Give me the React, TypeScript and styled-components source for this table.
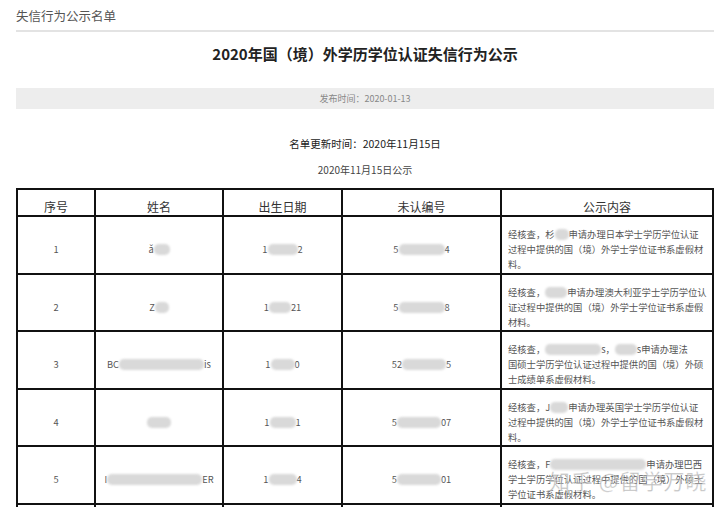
import React from "react";
import styled, { createGlobalStyle } from "styled-components";

const Global = createGlobalStyle`
  html, body { margin: 0; padding: 0; background: #fff; }
  body { font-family: "Noto Sans CJK SC", "Noto Sans", sans-serif; color: #333; }
`;

const Page = styled.div`
  padding: 0 6px 0 16px;
  overflow: hidden;
  height: 507px;
  box-sizing: border-box;
`;

const TopBar = styled.div`
  height: 30px;
  display: flex;
  align-items: center;
  font-size: 12.5px;
  color: #555;
  border-bottom: 2px solid #e3e3e3;
`;

const Title = styled.h1`
  margin: 12px 0 0;
  font-size: 15px;
  line-height: 20px;
  font-weight: 700;
  text-align: center;
  color: #222;
`;

const MetaBar = styled.div`
  margin-top: 24px;
  height: 21px;
  background: #ededed;
  display: flex;
  align-items: center;
  justify-content: center;
  font-size: 9px;
  color: #888;
`;

const Updated = styled.div`
  margin-top: 28px;
  font-size: 10.5px;
  line-height: 14px;
  color: #222;
  text-align: center;
`;

const Published = styled.div`
  margin-top: 12px;
  font-size: 10px;
  line-height: 14px;
  color: #444;
  text-align: center;
`;

const TableWrap = styled.div`
  position: relative;
  margin-top: 11px;
`;

const Table = styled.table`
  width: 698px;
  border-collapse: collapse;
  table-layout: fixed;
  border: 2px solid #111;
`;

const Th = styled.th`
  border: 2px solid #111;
  padding: 8px 0 0;
  height: 17px;
  line-height: 17px;
  font-size: 12px;
  font-weight: 400;
  color: #333;
  text-align: center;
`;

const Td = styled.td<{ $left?: boolean }>`
  border: 2px solid #111;
  padding: 10px ${(p) => (p.$left ? "4px 0.6px 6px" : "0 0.6px 0")};
  height: 45px;
  font-size: 9.3px;
  line-height: 15px;
  color: #555;
  text-align: ${(p) => (p.$left ? "left" : "center")};
  vertical-align: middle;
  white-space: nowrap;
`;

const Line = styled.span`
  display: block;
`;

const Blur = styled.span<{ $w: number }>`
  display: inline-block;
  width: ${(p) => p.$w}px;
  height: 11px;
  vertical-align: -2px;
  background: #d9d9d9;
  border-radius: 5px;
  filter: blur(1.2px);
`;

const Watermark = styled.div`
  position: absolute;
  left: 533px;
  top: 277px;
  font-size: 21px;
  letter-spacing: 1px;
  color: rgba(130, 130, 130, 0.5);
  -webkit-text-stroke: 0.6px rgba(255, 255, 255, 0.6);
  pointer-events: none;
  white-space: nowrap;
`;

type Row = {
  no: string;
  name: React.ReactNode;
  birth: React.ReactNode;
  id: React.ReactNode;
  content: React.ReactNode[];
};

const rows: Row[] = [
  {
    no: "1",
    name: (<>ǎ<Blur $w={16} /></>),
    birth: (<>1<Blur $w={30} />2</>),
    id: (<>5<Blur $w={46} />4</>),
    content: [
      <>经核查，杉<Blur $w={14} />申请办理日本学士学历学位认证</>,
      "过程中提供的国（境）外学士学位证书系虚假材",
      "料。",
    ],
  },
  {
    no: "2",
    name: (<>Z<Blur $w={14} /></>),
    birth: (<>1<Blur $w={22} />21</>),
    id: (<>5<Blur $w={46} />8</>),
    content: [
      <>经核查，<Blur $w={22} />申请办理澳大利亚学士学历学位认</>,
      "证过程中提供的国（境）外学士学位证书系虚假",
      "材料。",
    ],
  },
  {
    no: "3",
    name: (<>BC<Blur $w={85} />is</>),
    birth: (<>1<Blur $w={24} />0</>),
    id: (<>52<Blur $w={44} />5</>),
    content: [
      <>经核查，<Blur $w={56} />s，<Blur $w={22} />s申请办理法</>,
      "国硕士学历学位认证过程中提供的国（境）外硕",
      "士成绩单系虚假材料。",
    ],
  },
  {
    no: "4",
    name: (<Blur $w={24} />),
    birth: (<>1<Blur $w={26} />1</>),
    id: (<>5<Blur $w={44} />07</>),
    content: [
      <>经核查，J<Blur $w={18} />申请办理英国学士学历学位认证</>,
      "过程中提供的国（境）外学士学位证书系虚假材",
      "料。",
    ],
  },
  {
    no: "5",
    name: (<>I<Blur $w={95} />ER</>),
    birth: (<>1<Blur $w={28} />4</>),
    id: (<>5<Blur $w={44} />01</>),
    content: [
      <>经核查，F<Blur $w={96} />申请办理巴西</>,
      "学士学历学位认证过程中提供的国（境）外硕士",
      "学位证书系虚假材料。",
    ],
  },
  {
    no: "6",
    name: (<Blur $w={40} />),
    birth: (<>1<Blur $w={26} />3</>),
    id: (<>5<Blur $w={44} />02</>),
    content: [
      <>经核查，<Blur $w={30} />申请办理英国学士学历学位认证</>,
      "过程中提供的国（境）外学士学位证书系虚假材",
      "料。",
    ],
  },
];

export default function App() {
  return (
    <>
      <Global />
      <Page>
        <TopBar>失信行为公示名单</TopBar>
        <Title>2020年国（境）外学历学位认证失信行为公示</Title>
        <MetaBar>发布时间：2020-01-13</MetaBar>
        <Updated>名单更新时间：2020年11月15日</Updated>
        <Published>2020年11月15日公示</Published>
        <TableWrap>
          <Table>
            <colgroup>
              <col style={{ width: 78 }} />
              <col style={{ width: 128 }} />
              <col style={{ width: 119 }} />
              <col style={{ width: 159 }} />
              <col style={{ width: 212 }} />
            </colgroup>
            <thead>
              <tr>
                <Th>序号</Th>
                <Th>姓名</Th>
                <Th>出生日期</Th>
                <Th>未认编号</Th>
                <Th>公示内容</Th>
              </tr>
            </thead>
            <tbody>
              {rows.map((r) => (
                <tr key={r.no}>
                  <Td>{r.no}</Td>
                  <Td>{r.name}</Td>
                  <Td>{r.birth}</Td>
                  <Td>{r.id}</Td>
                  <Td $left>
                    {r.content.map((c, i) => (
                      <Line key={i}>{c}</Line>
                    ))}
                  </Td>
                </tr>
              ))}
            </tbody>
          </Table>
          <Watermark>知乎 @留学万晓</Watermark>
        </TableWrap>
      </Page>
    </>
  );
}
